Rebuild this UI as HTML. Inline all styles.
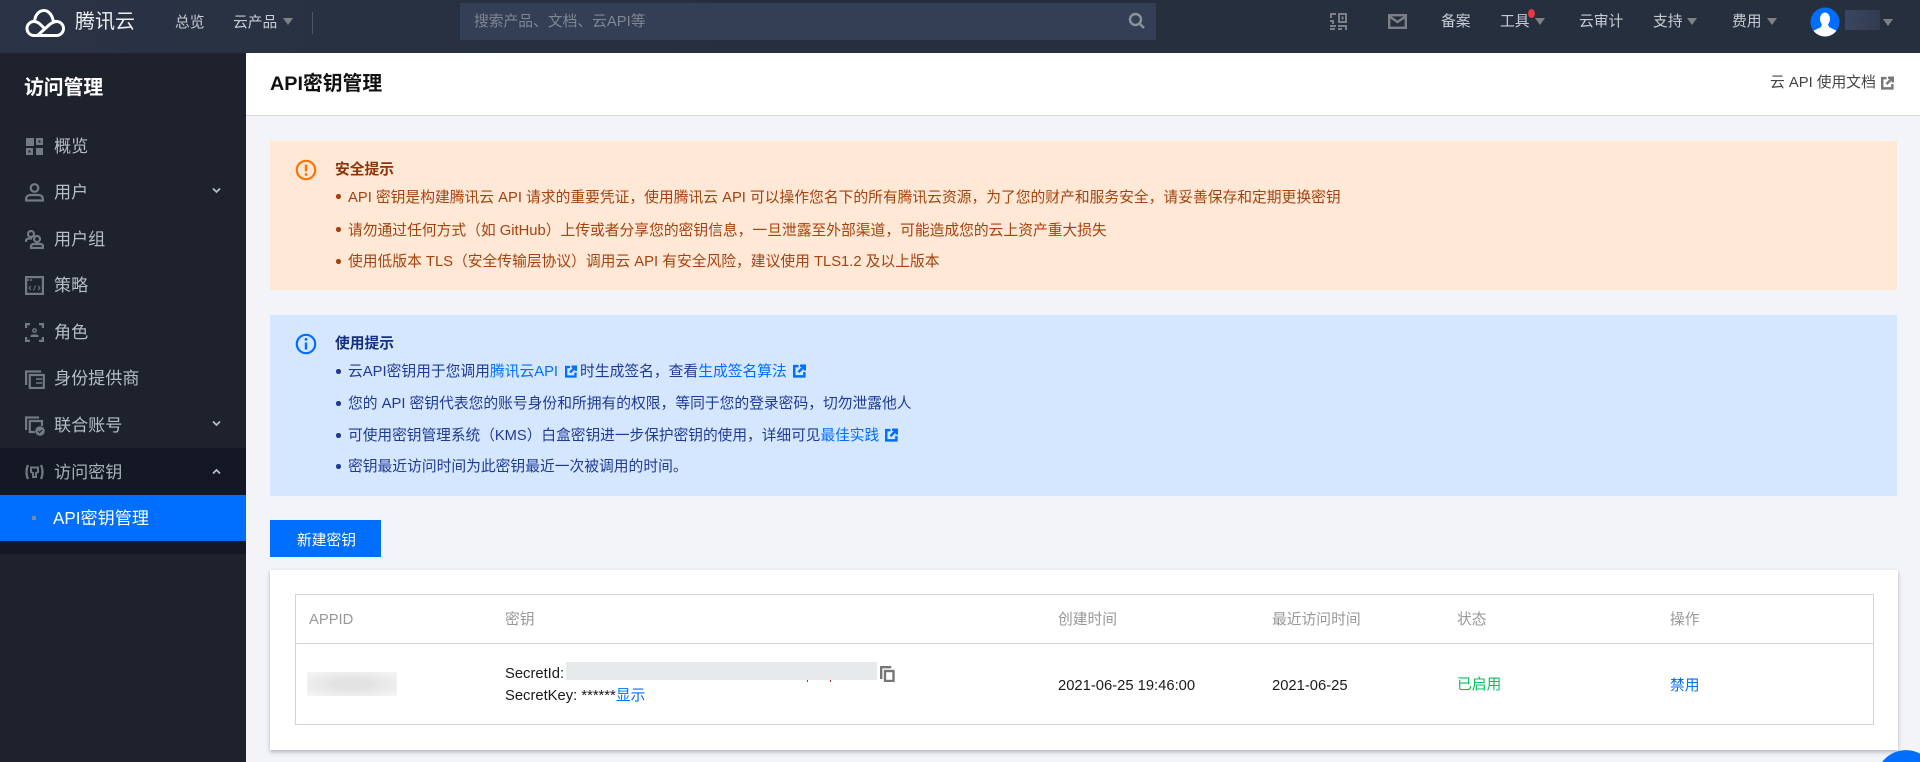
<!DOCTYPE html>
<html lang="zh">
<head>
<meta charset="utf-8">
<title>API密钥管理</title>
<style>
html,body{margin:0;padding:0;width:1920px;height:762px;overflow:hidden;background:#f2f4f8;}
body{position:relative;font-family:"Liberation Sans","Noto Sans CJK SC",sans-serif;font-size:14.78px;color:#000;}
.a{position:absolute;}
.t{position:absolute;white-space:nowrap;height:20px;line-height:20px;}
.h{color:#c5ccd3;font-size:14.78px;}
.arr{position:absolute;width:0;height:0;border-left:5px solid transparent;border-right:5px solid transparent;border-top:7.5px solid #7d8288;}
.s{color:#b5bdc6;font-size:17.1px;left:54px;height:24px;line-height:24px;}
.ico{position:absolute;left:25px;width:19px;height:19px;fill:none;stroke:#727a83;stroke-width:2.2;}
.or{color:#a5420e;}
.bl{color:#1f3a96;}
.dot{position:absolute;left:336px;width:4.5px;height:4.5px;border-radius:50%;}
.lk{color:#006eff;}
.th{color:#989898;}
.td{color:#1a1a1a;}
.ext{display:inline-block;vertical-align:-2px;margin-left:3px;}
</style>
</head>
<body>
<!-- header -->
<div class="a" style="left:0;top:0;width:1920px;height:53px;background:linear-gradient(90deg,#2a3345,#262f3e 40%);"></div>
<svg class="a" style="left:24px;top:9px" width="42" height="29" viewBox="0 0 41 29" fill="none" stroke="#fff" stroke-width="3">
<path d="M13 26.500H32a7 7 0 0 0 0-14c-1 0-2 .1-3 .6C28 6 24 1.500 19.500 1.500 14.500 1.500 10.500 6 10 12.500"/>
<path d="M9.500 12.500a7 7 0 0 0 0 14H13L24 16.500c3-2.800 5.500-4 8-4"/>
<path d="M9.500 12.500c3 0 5 1.500 7 3.500l4 4"/>
</svg>
<div class="t" style="left:75px;top:12px;font-size:20px;color:#eef0f2;">腾讯云</div>
<div class="t h" style="left:175px;top:13px;">总览</div>
<div class="t h" style="left:233px;top:13px;">云产品</div>
<div class="arr" style="left:283px;top:18px;"></div>
<div class="a" style="left:312px;top:12px;width:1px;height:22px;background:#4e5663;"></div>
<div class="a" style="left:460px;top:3px;width:696px;height:37px;background:#323f55;"></div>
<div class="t" style="left:474px;top:12px;color:#7f8793;font-size:14.78px;">搜索产品、文档、云API等</div>
<svg class="a" style="left:1128px;top:12px" width="18" height="18" viewBox="0 0 18 18" fill="none" stroke="#8b929c" stroke-width="2.400"><circle cx="7.500" cy="7.500" r="5.500"/><path d="M11.500 11.500L16 16"/></svg>

<svg class="a" style="left:1330px;top:13px" width="18" height="18" viewBox="0 0 18 18" fill="#7b8087"><path fill-rule="evenodd" d="M0 0h6v2H2v3H0zM8 0h9v10H8zm2 2v6h5V2zM11.500 3.500h2v3h-2zM0 7h4v4H2V9H0zM0 12h6v2H0zM0 15h5v2H0zM8 12h9v5h-2v-3H8zM8 15h4v2H8z"/></svg>
<svg class="a" style="left:1388px;top:14px" width="19" height="15" viewBox="0 0 19 15" fill="none" stroke="#7b8087" stroke-width="2.400"><rect x="1.200" y="1.200" width="16.600" height="12.600"/><path d="M1.500 2.500l8 5.500 8-5.500"/></svg>
<div class="t h" style="left:1441px;top:12px;">备案</div>
<div class="t h" style="left:1500px;top:12px;">工具</div>
<div class="a" style="left:1528px;top:9px;width:7px;height:9px;border-radius:50%;background:#e8373f;"></div>
<div class="arr" style="left:1535px;top:18px;"></div>
<div class="t h" style="left:1579px;top:12px;">云审计</div>
<div class="t h" style="left:1653px;top:12px;">支持</div>
<div class="arr" style="left:1687px;top:18px;"></div>
<div class="t h" style="left:1732px;top:12px;">费用</div>
<div class="arr" style="left:1767px;top:18px;"></div>
<svg class="a" style="left:1810px;top:7px" width="30" height="30" viewBox="0 0 30 30"><defs><clipPath id="c"><circle cx="15" cy="15" r="14.500"/></clipPath></defs><circle cx="15" cy="15" r="14.500" fill="#006eff"/><g clip-path="url(#c)" fill="#fff"><ellipse cx="15" cy="12" rx="5" ry="6.500"/><path d="M12 17h6l1 3 8 4v6H3v-6l8-4z"/></g></svg>
<div class="a" style="left:1845px;top:10px;width:35px;height:20px;background:linear-gradient(90deg,#3a4660,#323c50);"></div>
<div class="arr" style="left:1883px;top:19px;"></div>

<!-- sidebar -->
<div class="a" style="left:0;top:53px;width:246px;height:709px;background:#1e222d;"></div>
<div class="t" style="left:24px;top:76px;font-size:19.8px;font-weight:bold;color:#fff;height:24px;line-height:24px;">访问管理</div>

<svg class="ico" style="top:137px;" viewBox="0 0 19 19"><path fill="#727a83" stroke="none" fill-rule="evenodd" d="M1 1h8v8H1zM11 11h7v7h-7zM11 1h7v7h-7zm2.500 2.500v2h2v-2zM1 11h7v7H1zm2.500 2.500v2h2v-2z"/></svg>
<div class="t s" style="top:135px;">概览</div>

<svg class="ico" style="top:183px;" viewBox="0 0 19 19"><circle cx="9.500" cy="5" r="3.800"/><path d="M1.200 17.500v-2c0-2 2-3.500 4-3.500h8.600c2 0 4 1.500 4 3.500v2z"/></svg>
<div class="t s" style="top:181px;">用户</div>
<svg class="a" style="left:212px;top:187px" width="9" height="7" viewBox="0 0 9 7" fill="none" stroke="#b5bdc6" stroke-width="1.800"><path d="M1 1.500l3.500 3.500L8 1.500"/></svg>

<svg class="ico" style="top:230px;" viewBox="0 0 19 19"><circle cx="6" cy="4" r="3"/><path d="M1 12v-1c0-1.500 1-2.500 3-2.500h3"/><circle cx="12" cy="9" r="3"/><path d="M6 18v-1.500c0-1.500 1-2.500 3-2.500h6c2 0 3 1 3 2.500V18z"/></svg>
<div class="t s" style="top:228px;">用户组</div>

<svg class="ico" style="top:276px;" viewBox="0 0 19 19"><rect x="1.100" y="1.100" width="16.800" height="16.800"/><path d="M2 4h5" stroke-width="1.500" stroke-dasharray="2 1"/><path d="M6 10l-2 2 2 2M13 10l2 2-2 2M10.500 9.500l-2 5" stroke-width="1"/></svg>
<div class="t s" style="top:274px;">策略</div>

<svg class="ico" style="top:323px;" viewBox="0 0 19 19"><path d="M5 1.100H1.100V5M14 1.100h3.900V5M1.100 14v3.900H5M17.900 14v3.900H14"/><circle cx="9.500" cy="7.500" r="1.700" stroke-width="1.400"/><path d="M5.500 14v-1c0-1 1-1.500 2-1.500h4c1 0 2 .5 2 1.500v1z" fill="#727a83" stroke="none"/></svg>
<div class="t s" style="top:321px;">角色</div>

<svg class="ico" style="top:370px;left:25px;width:20px;" viewBox="0 0 20 19"><path d="M1.100 15V1.500h15"/><rect x="4.800" y="5" width="14" height="13"/><path d="M11 9h6M11 13h6" stroke-width="1.600"/></svg>
<div class="t s" style="top:367px;">身份提供商</div>

<svg class="ico" style="top:416px;left:25px;width:20px;height:20px;" viewBox="0 0 20 20"><path d="M1.100 14V1.500h13"/><path d="M10 16H4.800V5H17v5"/><circle cx="15" cy="15" r="4.800" fill="#727a83" stroke="none"/><path d="M13 15l1.500 1.500 2.500-2.500" stroke="#1e222d" stroke-width="1.200"/></svg>
<div class="t s" style="top:414px;">联合账号</div>
<svg class="a" style="left:212px;top:420px" width="9" height="7" viewBox="0 0 9 7" fill="none" stroke="#b5bdc6" stroke-width="1.800"><path d="M1 1.500l3.500 3.500L8 1.500"/></svg>

<div class="a" style="left:0;top:448px;width:246px;height:106px;background:#141824;"></div>
<svg class="ico" style="top:463px;left:25px;" viewBox="0 0 19 19"><path d="M3 2C1 6 1 12 3 16M16 2c2 4 2 10 0 14" stroke-width="2.200"/><path d="M6 4.500h7v4.500l-2 1v4H8v-4L6 9z" stroke-width="1.900"/></svg>
<div class="t s" style="top:461px;color:#a9b0b8;">访问密钥</div>
<svg class="a" style="left:212px;top:468px" width="9" height="7" viewBox="0 0 9 7" fill="none" stroke="#b5bdc6" stroke-width="1.800"><path d="M1 5.500L4.500 2 8 5.500"/></svg>
<div class="a" style="left:0;top:495px;width:246px;height:46px;background:#006eff;"></div>
<div class="a" style="left:32px;top:516px;width:4px;height:4px;background:#7a8ba5;"></div>
<div class="t s" style="left:53px;top:507px;color:#fff;">API密钥管理</div>

<!-- title bar -->
<div class="a" style="left:246px;top:53px;width:1674px;height:62px;background:#fff;border-bottom:1px solid #d5d8e2;"></div>
<div class="t" style="left:270px;top:72px;font-size:19.8px;font-weight:bold;color:#111;height:24px;line-height:24px;">API密钥管理</div>
<div class="t" style="left:1770px;top:73px;font-size:14.78px;color:#444;">云 API 使用文档</div>
<svg class="a" style="left:1881px;top:76px" width="13" height="14" viewBox="0 0 12 12" fill="none" stroke="#777" stroke-width="2.300"><path d="M10.500 7v4H1.100V1.500h4M6.500 1.100h4.400v4.400M10.500 1.500L5 7"/></svg>

<!-- warning -->
<div class="a" style="left:270px;top:141px;width:1627px;height:149px;background:#ffe8d5;"></div>
<svg class="a" style="left:295px;top:159px" width="22" height="22" viewBox="0 0 22 22"><circle cx="11" cy="11" r="9.200" fill="none" stroke="#ff7200" stroke-width="2.200"/><path d="M11 5.500v7" stroke="#ff7200" stroke-width="2.400"/><circle cx="11" cy="15.500" r="1.400" fill="#ff7200"/></svg>
<div class="t" style="left:335px;top:160px;font-weight:bold;color:#8b3407;">安全提示</div>
<div class="dot" style="top:194px;background:#a5420e;"></div>
<div class="t or" style="left:348px;top:188px;">API 密钥是构建腾讯云 API 请求的重要凭证，使用腾讯云 API 可以操作您名下的所有腾讯云资源，为了您的财产和服务安全，请妥善保存和定期更换密钥</div>
<div class="dot" style="top:227px;background:#a5420e;"></div>
<div class="t or" style="left:348px;top:221px;">请勿通过任何方式（如 GitHub）上传或者分享您的密钥信息，一旦泄露至外部渠道，可能造成您的云上资产重大损失</div>
<div class="dot" style="top:259px;background:#a5420e;"></div>
<div class="t or" style="left:348px;top:252px;">使用低版本 TLS（安全传输层协议）调用云 API 有安全风险，建议使用 TLS1.2 及以上版本</div>

<!-- info -->
<div class="a" style="left:270px;top:315px;width:1627px;height:181px;background:#d5e7ff;"></div>
<svg class="a" style="left:295px;top:333px" width="22" height="22" viewBox="0 0 22 22"><circle cx="11" cy="11" r="9.200" fill="none" stroke="#006eff" stroke-width="2.200"/><path d="M11 9.500v7" stroke="#006eff" stroke-width="2.400"/><circle cx="11" cy="6.300" r="1.400" fill="#006eff"/></svg>
<div class="t" style="left:335px;top:334px;font-weight:bold;color:#14307f;">使用提示</div>
<div class="dot" style="top:369px;background:#1f3a96;"></div>
<div class="t bl" style="left:348px;top:362px;">云API密钥用于您调用<span class="lk">腾讯云API</span><svg class="ext" style="margin:0 3px 0 7px" width="12" height="13" viewBox="0 0 12 12" fill="none" stroke="#006eff" stroke-width="2.300"><path d="M10.500 7v4H1.100V1.500h4M6.500 1.100h4.400v4.400M10.500 1.500L5 7"/></svg>时生成签名，查看<span class="lk">生成签名算法</span><svg class="ext" style="margin-left:6px" width="13" height="14" viewBox="0 0 12 12" fill="none" stroke="#006eff" stroke-width="2.300"><path d="M10.500 7v4H1.100V1.500h4M6.500 1.100h4.400v4.400M10.500 1.500L5 7"/></svg></div>
<div class="dot" style="top:401px;background:#1f3a96;"></div>
<div class="t bl" style="left:348px;top:394px;">您的 API 密钥代表您的账号身份和所拥有的权限，等同于您的登录密码，切勿泄露他人</div>
<div class="dot" style="top:433px;background:#1f3a96;"></div>
<div class="t bl" style="left:348px;top:426px;font-size:14.7px;">可使用密钥管理系统（KMS）白盒密钥进一步保护密钥的使用，详细可见<span class="lk">最佳实践</span><svg class="ext" style="margin-left:6px" width="13" height="14" viewBox="0 0 12 12" fill="none" stroke="#006eff" stroke-width="2.300"><path d="M10.500 7v4H1.100V1.500h4M6.500 1.100h4.400v4.400M10.500 1.500L5 7"/></svg></div>
<div class="dot" style="top:464px;background:#1f3a96;"></div>
<div class="t bl" style="left:348px;top:457px;">密钥最近访问时间为此密钥最近一次被调用的时间。</div>

<!-- button -->
<div class="a" style="left:270px;top:520px;width:111px;height:37px;background:#006eff;"></div>
<div class="t" style="left:271px;top:531px;width:111px;text-align:center;color:#fff;font-size:14.78px;">新建密钥</div>

<!-- card -->
<div class="a" style="left:270px;top:570px;width:1628px;height:180px;background:#fff;box-shadow:0 2px 4px rgba(54,58,80,.35);"></div>
<div class="a" style="left:295px;top:594px;width:1577px;height:129px;border:1px solid #cfd5de;"></div>
<div class="a" style="left:295px;top:643px;width:1578px;height:1px;background:#cfd5de;"></div>
<div class="t th" style="left:309px;top:610px;">APPID</div>
<div class="t th" style="left:505px;top:610px;">密钥</div>
<div class="t th" style="left:1058px;top:610px;">创建时间</div>
<div class="t th" style="left:1272px;top:610px;">最近访问时间</div>
<div class="t th" style="left:1457px;top:610px;">状态</div>
<div class="t th" style="left:1670px;top:610px;">操作</div>

<div class="a" style="left:307px;top:672px;width:90px;height:24px;background:radial-gradient(ellipse at center,#e3e3e3 30%,#f6f6f6 100%);"></div>
<div class="t td" style="left:505px;top:664px;">SecretId:</div>
<div class="a" style="left:566px;top:662px;width:311px;height:18px;background:#e8e9ea;"></div>
<div class="a" style="left:807px;top:680px;width:1px;height:2px;background:#a33;"></div>
<div class="a" style="left:830px;top:680px;width:1px;height:2px;background:#a33;"></div>
<svg class="a" style="left:880px;top:666px" width="15" height="16" viewBox="0 0 15 16" fill="none" stroke="#777" stroke-width="2.400"><path d="M1.200 13V1.200h10"/><rect x="5" y="5" width="8.500" height="10"/></svg>
<div class="t td" style="left:505px;top:686px;">SecretKey: ******<span class="lk">显示</span></div>
<div class="t td" style="left:1058px;top:676px;">2021-06-25 19:46:00</div>
<div class="t td" style="left:1272px;top:676px;">2021-06-25</div>
<div class="t" style="left:1457px;top:675px;color:#0abf5b;">已启用</div>
<div class="t lk" style="left:1670px;top:676px;">禁用</div>

<div class="a" style="left:1870px;top:745px;width:50px;height:17px;background:radial-gradient(circle 30px at 36px 35px,#006eff 99%,rgba(0,110,255,0) 100%);"></div>
</body>
</html>
